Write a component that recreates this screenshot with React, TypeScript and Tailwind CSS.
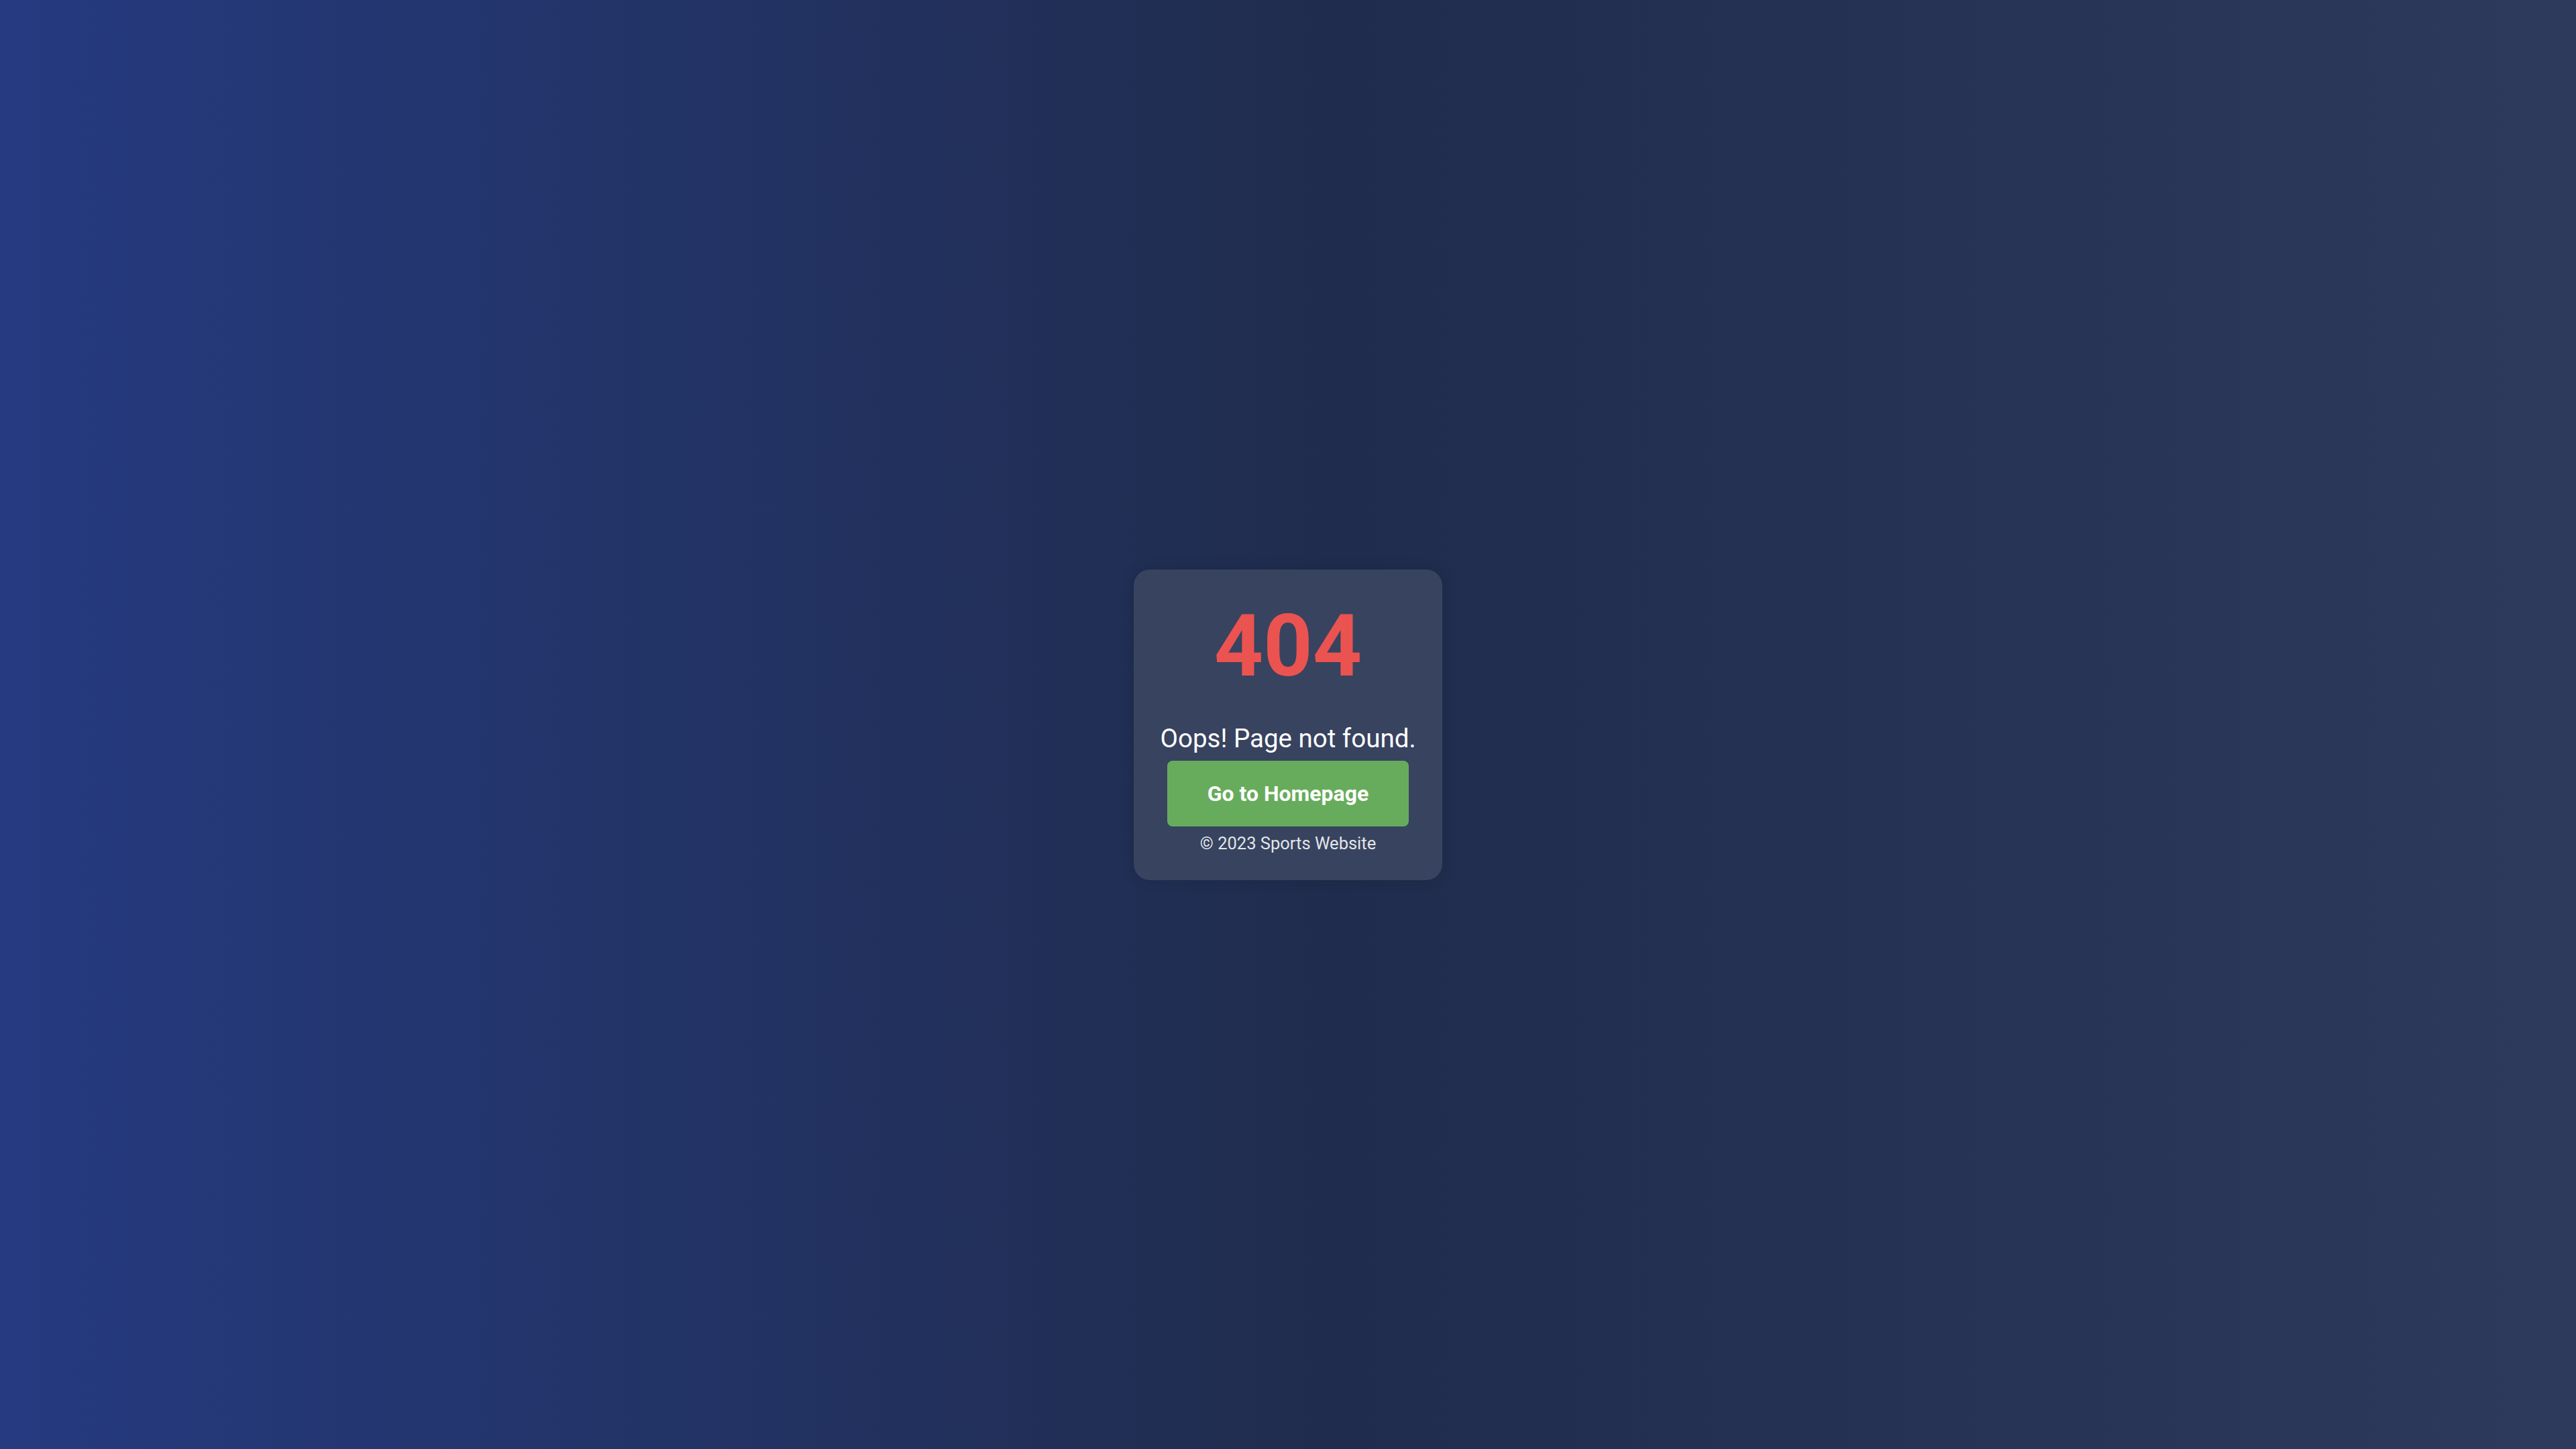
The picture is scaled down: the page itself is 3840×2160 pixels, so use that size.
export default function App() {
  return (
    <div
      className="w-full min-h-screen flex items-center justify-center bg-gradient-to-r from-[#253a80] via-[#202c4d] via-52% to-[#2e3a5b]"
      style={{ fontFamily: 'Roboto, "Noto Sans", "Liberation Sans", sans-serif' }}
    >
      <div className="w-[460px] rounded-[24px] bg-[#38435f] shadow-[0_0_20px_rgba(0,0,0,0.12)] px-10 pt-[39px] pb-[40px] flex flex-col items-center text-center">
        <h1 className="text-[128px] leading-[150px] font-bold text-[#eb5350]">404</h1>
        <p className="mt-[41px] text-[38.5px] leading-[44px] text-white whitespace-nowrap">Oops! Page not found.</p>
        <a
          href="#"
          className="mt-[11px] block rounded-[8px] bg-[#67ac5c] px-[60px] py-[30px] text-[32px] leading-[38px] font-bold text-white"
        >
          Go to Homepage
        </a>
        <p className="mt-[10px] text-[25.5px] leading-[30px] text-[#e2e5ea] whitespace-nowrap">© 2023 Sports Website</p>
      </div>
    </div>
  );
}
